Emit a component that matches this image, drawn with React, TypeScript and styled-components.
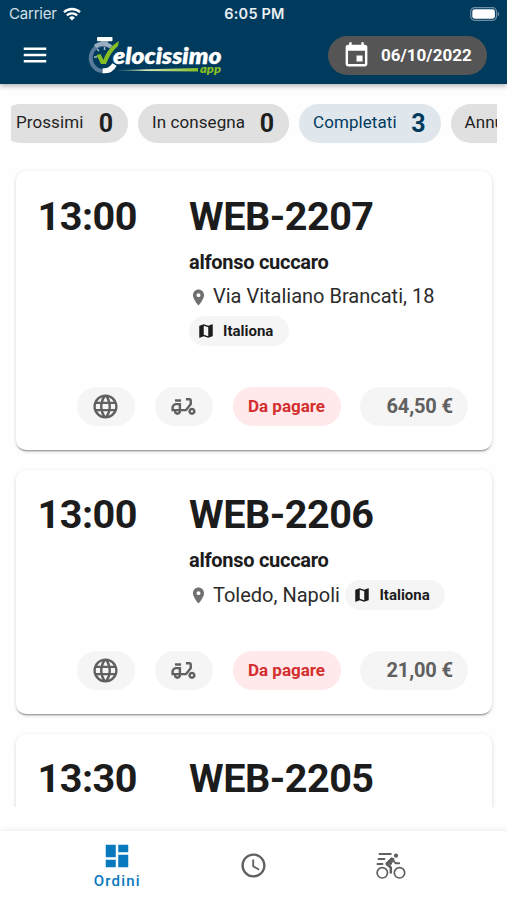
import React from "react";
import styled, { createGlobalStyle } from "styled-components";
import {
  MdAccessTime,
  MdDashboard,
  MdEvent,
  MdLanguage,
  MdMap,
  MdMenu,
  MdPlace,
} from "react-icons/md";

const GlobalStyle = createGlobalStyle`
  * { box-sizing: border-box; }
  body {
    margin: 0;
    background: #fefefe;
    color: #1c1c1c;
    font-family: Roboto, sans-serif;
  }
  button { font: inherit; color: inherit; border: 0; padding: 0; background: none; }
  svg { display: block; flex: none; }
`;

const Screen = styled.div`
  width: 507px;
  height: 900px;
  display: flex;
  flex-direction: column;
  overflow: hidden;
`;

const Header = styled.header`
  height: 84px;
  flex: none;
  background: #003a5d;
  color: #fff;
  box-shadow: 0 2px 5px rgba(0, 0, 0, 0.3);
`;

const StatusBar = styled.div`
  height: 27px;
  display: grid;
  grid-template-columns: 1fr auto 1fr;
  align-items: center;
  padding: 0 7px 0 9px;
`;

const Carrier = styled.div`
  display: flex;
  align-items: center;
  gap: 6px;
  font: 400 15px Inter, sans-serif;
  color: #d5e0e8;
  letter-spacing: -0.2px;
`;

const Clock = styled.div`
  font: 600 14.5px Inter, sans-serif;
  color: #eaf0f4;
  letter-spacing: 0.2px;
`;

const BatterySlot = styled.div`
  display: flex;
  justify-content: flex-end;
`;

const Toolbar = styled.div`
  height: 57px;
  display: flex;
  align-items: center;
  padding: 0 20px;
`;

const MenuButton = styled.button`
  width: 30px;
  height: 30px;
  margin-bottom: 2px;
  display: flex;
  align-items: center;
  justify-content: center;
`;

const LogoSlot = styled.div`
  margin-left: 36px;
  flex: 1;
`;

const DateButton = styled.button`
  width: 159px;
  height: 39px;
  margin-bottom: 1px;
  border-radius: 20px;
  background: #555;
  display: flex;
  align-items: center;
  padding-left: 14px;
  gap: 10px;
  font-size: 17px;
  font-weight: 700;
  color: #fff;
`;

const Filters = styled.div`
  height: 39px;
  margin: 20px 10px 0 11px;
  overflow: hidden;
  flex: none;
`;

const FilterTrack = styled.div`
  display: flex;
  gap: 10px;
  margin-left: -10px;
  width: max-content;
`;

const Filter = styled.button<{ $width: number; $active?: boolean }>`
  width: ${(p) => p.$width}px;
  height: 38.5px;
  border-radius: 20px;
  background: ${(p) => (p.$active ? "#e0e7ec" : "#e0e0e0")};
  color: ${(p) => (p.$active ? "#003a5d" : "#1f1f1f")};
  display: flex;
  align-items: center;
  justify-content: space-between;
  padding: 0 15px 2px 14px;
  font-size: 17px;
  letter-spacing: 0.08px;

  &:first-child { padding-left: 15px; }
`;

const FilterCount = styled.b`
  font-size: 25px;
  line-height: 30px;
  letter-spacing: 0;
  padding-top: 3px;
`;

const Orders = styled.main`
  height: 664px;
  flex: none;
  padding: 28px 15px 0 15.5px;
  display: flex;
  flex-direction: column;
  gap: 19.5px;
  overflow: hidden;
`;

const Card = styled.article<{ $height: number }>`
  height: ${(p) => p.$height}px;
  flex: none;
  border-radius: 10px;
  background: #fff;
  box-shadow: 0 2px 2px -1px rgba(0, 0, 0, 0.42), 0 1px 4px rgba(0, 0, 0, 0.13);
  padding: 21.5px 24px 24.5px 22px;
  display: flex;
  flex-direction: column;
  justify-content: space-between;
`;

const Summary = styled.div`
  display: grid;
  grid-template-columns: 151.5px 1fr;
`;

const Headline = styled.div`
  font-size: 39.6px;
  line-height: 48px;
  font-weight: 700;
  letter-spacing: -0.5px;
`;

const Customer = styled.div`
  margin-top: 9px;
  font-size: 20px;
  line-height: 25px;
  font-weight: 700;
  letter-spacing: -0.28px;
`;

const Address = styled.div`
  margin-top: 6.5px;
  display: flex;
  flex-wrap: wrap;
  align-items: center;
  row-gap: 5px;
`;

const Street = styled.span`
  display: flex;
  align-items: center;
  gap: 5px;
  height: 30px;
  font-size: 20px;
  color: #2b2b2b;
  margin-right: 5.5px;
`;

const Pin = styled(MdPlace)`
  margin-top: 2px;
`;

const Zone = styled.span`
  width: 99.5px;
  height: 30px;
  border-radius: 15px;
  background: #f5f5f5;
  display: flex;
  align-items: center;
  gap: 8px;
  padding-left: 8px;
  font-size: 15px;
  font-weight: 700;
`;

const Badges = styled.div`
  display: flex;
  justify-content: flex-end;
  gap: 19.5px;
`;

const Badge = styled.span<{ $width: number; $tone?: "alert"; $size?: number }>`
  width: ${(p) => p.$width}px;
  height: 39px;
  border-radius: 20px;
  background: ${(p) => (p.$tone ? "#ffe9eb" : "#f5f5f5")};
  color: ${(p) => (p.$tone ? "#d32f2f" : "#606060")};
  display: flex;
  align-items: center;
  justify-content: center;
  font-size: ${(p) => p.$size ?? 17}px;
  font-weight: 700;
  padding-bottom: ${(p) => (p.$tone ? 1 : 0)}px;
`;

const Amount = styled(Badge)`
  justify-content: flex-end;
  padding-right: 15px;
  letter-spacing: -0.1px;
`;

const Navigation = styled.nav`
  height: 69px;
  margin-top: auto;
  flex: none;
  display: grid;
  grid-template-columns: repeat(3, 137px);
  justify-content: center;
  background: #fff;
  box-shadow: 0 -1px 5px rgba(0, 0, 0, 0.07);
`;

const Tab = styled.button<{ $active?: boolean }>`
  display: flex;
  flex-direction: column;
  align-items: center;
  justify-content: center;
  color: ${(p) => (p.$active ? "#0879bd" : "#606060")};
  font-size: 15px;
  line-height: 20px;
  font-weight: 500;
  letter-spacing: 1.2px;
`;

const TabLabel = styled.span`
  padding-left: 1.5px;
`;

const Wifi = () => (
  <svg width="18" height="14" viewBox="0 0 18 14" fill="none" stroke="#fff" strokeWidth="2.4">
    <path d="M1 5.2a11.5 11.5 0 0 1 16 0" />
    <path d="M3.9 8.4a7.4 7.4 0 0 1 10.2 0" />
    <path d="M9 13.6 6.1 10.7a4.2 4.2 0 0 1 5.8 0Z" fill="#fff" stroke="none" />
  </svg>
);

const Battery = () => (
  <svg width="30" height="14" viewBox="0 0 30 14">
    <rect x=".7" y=".7" width="25.8" height="12.6" rx="4" fill="none" stroke="#6e8fa5" strokeWidth="1.2" />
    <rect x="2.3" y="2.3" width="22.6" height="9.4" rx="2.4" fill="#fff" />
    <path d="M27.7 4.7c2 .6 2 4 0 4.6Z" fill="#6e8fa5" />
  </svg>
);

const Logo = () => (
  <svg width="138" height="40" viewBox="0 0 138 40">
    <defs>
      <linearGradient id="swoosh">
        <stop offset="0" stopColor="#8fb78a" stopOpacity=".2" />
        <stop offset=".35" stopColor="#d9e9bd" />
        <stop offset="1" stopColor="#86bc25" />
      </linearGradient>
    </defs>
    <rect x="11" y="1" width="15.5" height="4.2" rx="1" fill="#fff" />
    <path d="M15 5h7v3h-7z" fill="#8ba5b8" />
    <path d="M26 11.5A13.2 13.2 0 1 0 16 35" fill="none" stroke="#58799a" strokeWidth="4" />
    <path d="M9 10.3a13.2 13.2 0 0 1 16 .4" fill="none" stroke="#9ab0c2" strokeWidth="4" />
    <path d="M18.5 11v3M8 21h3M11 13l2 2" stroke="#a9bdca" strokeWidth="1.5" />
    <path d="M16.5 34.8c6 .5 9.5-1.5 12-6.3" fill="none" stroke="#fff" strokeWidth="5" />
    <path d="m10.5 19 4-1 3 6C20 16 26 9 33 5l-1 5c-5 4-9 10-12 18h-5z" fill="#86bc25" />
    <text x="27" y="27.5" fill="#fff" stroke="#fff" strokeWidth=".3" fontFamily="Lato" fontSize="23" fontWeight="800" fontStyle="italic" textLength="108.5" lengthAdjust="spacingAndGlyphs">elocissimo</text>
    <path d="M32 34 112 32v3.5L32 34.7Z" fill="url(#swoosh)" />
    <text x="114" y="36.5" fill="#86bc25" fontFamily="Lato" fontSize="11.5" fontWeight="800" fontStyle="italic" textLength="21" lengthAdjust="spacingAndGlyphs">app</text>
  </svg>
);

const Moped = () => (
  <svg width="29" height="29" viewBox="0 0 24 24" fill="currentColor">
    <path d="M19 7c0-1.1-.9-2-2-2h-3v2h3v2.65L13.52 14H10V9H6c-2.21 0-4 1.79-4 4v3h2c0 1.66 1.34 3 3 3s3-1.34 3-3h4.48L19 10.35V7ZM4 14v-1c0-1.1.9-2 2-2h2v3H4Zm3 3c-.55 0-1-.45-1-1h2c0 .55-.45 1-1 1Z" />
    <path d="M5 6h5v2H5ZM19 13c-1.66 0-3 1.34-3 3s1.34 3 3 3 3-1.34 3-3-1.34-3-3-3Zm0 4c-.55 0-1-.45-1-1s.45-1 1-1 1 .45 1 1-.45 1-1 1Z" />
  </svg>
);

const Cyclist = () => (
  <svg width="30" height="28" viewBox="0 0 30 28" fill="none" stroke="currentColor" strokeLinecap="round" strokeLinejoin="round">
    <circle cx="6.3" cy="20.8" r="5.2" strokeWidth="1.7" />
    <circle cx="23.5" cy="20.8" r="5.2" strokeWidth="1.7" />
    <circle cx="20" cy="3.7" r="2.1" fill="currentColor" stroke="none" />
    <path d="M3.5 2h11.3M2.5 7h6M1.5 12h5" strokeWidth="1.9" />
    <path d="m15.5 7-4.7 5.3 4 3.1v5.2" strokeWidth="2.5" />
    <path d="m10 11 5.5-5.2 2.6 1-3.4 6.2Z" fill="currentColor" strokeWidth="1" />
    <path d="m17 8 2.5 3.3h3.7" strokeWidth="1.9" />
  </svg>
);

interface Order {
  time: string;
  code: string;
  address: string;
  amount: string;
  height: number;
}

const filters = [
  { label: "Prossimi", count: 0, width: 127 },
  { label: "In consegna", count: 0, width: 151 },
  { label: "Completati", count: 3, width: 141.5, active: true },
  { label: "Annullati", count: 0, width: 130 },
];

const orders: Order[] = [
  { time: "13:00", code: "WEB-2207", address: "Via Vitaliano Brancati, 18", amount: "64,50 €", height: 279 },
  { time: "13:00", code: "WEB-2206", address: "Toledo, Napoli", amount: "21,00 €", height: 244.5 },
  { time: "13:30", code: "WEB-2205", address: "Toledo, Napoli", amount: "18,00 €", height: 244.5 },
];

const OrderCard = ({ order }: { order: Order }) => (
  <Card $height={order.height}>
    <Summary>
      <Headline>{order.time}</Headline>
      <div>
        <Headline>{order.code}</Headline>
        <Customer>alfonso cuccaro</Customer>
        <Address>
          <Street>
            <Pin size={19} color="#707070" />
            {order.address}
          </Street>
          <Zone>
            <MdMap size={18} />
            Italiona
          </Zone>
        </Address>
      </div>
    </Summary>
    <Badges>
      <Badge $width={58.5}><MdLanguage size={29} /></Badge>
      <Badge $width={58.5}><Moped /></Badge>
      <Badge $width={108} $tone="alert">Da pagare</Badge>
      <Amount $width={108} $size={20}>{order.amount}</Amount>
    </Badges>
  </Card>
);

export default function App() {
  return (
    <Screen>
      <GlobalStyle />
      <Header>
        <StatusBar>
          <Carrier>Carrier <Wifi /></Carrier>
          <Clock>6:05 PM</Clock>
          <BatterySlot><Battery /></BatterySlot>
        </StatusBar>
        <Toolbar>
          <MenuButton aria-label="Menu"><MdMenu size={30} /></MenuButton>
          <LogoSlot><Logo /></LogoSlot>
          <DateButton><MdEvent size={29} />06/10/2022</DateButton>
        </Toolbar>
      </Header>
      <Filters>
        <FilterTrack>
          {filters.map((f) => (
            <Filter key={f.label} $width={f.width} $active={f.active}>
              {f.label}
              <FilterCount>{f.count}</FilterCount>
            </Filter>
          ))}
        </FilterTrack>
      </Filters>
      <Orders>
        {orders.map((order) => <OrderCard key={order.code} order={order} />)}
      </Orders>
      <Navigation>
        <Tab $active><MdDashboard size={30} /><TabLabel>Ordini</TabLabel></Tab>
        <Tab aria-label="Orari"><MdAccessTime size={29} /></Tab>
        <Tab aria-label="Consegne"><Cyclist /></Tab>
      </Navigation>
    </Screen>
  );
}
